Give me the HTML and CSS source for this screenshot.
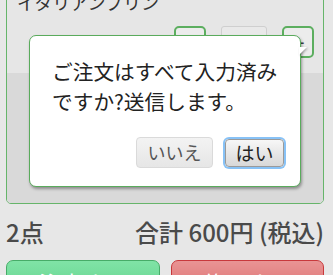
FILE: index.html
```html
<!DOCTYPE html>
<html lang="ja">
<head>
    <meta charset="UTF-8">
    <meta name="viewport" content="width=device-width, initial-scale=1.0">
    <title>注文確認</title>
    <link rel="stylesheet" href="styles.css">
</head>
<body>
    <div class="page">
        <div class="item">
            <div class="item-head">
                <div class="item-name">イタリアンプリン</div>
                <div class="qty">
                    <button class="qty-btn">−</button>
                    <div class="qty-value">1</div>
                    <button class="qty-btn">+</button>
                </div>
            </div>
            <div class="item-body"></div>
        </div>

        <div class="summary">
            <span class="count">2点</span>
            <span class="total">合計 600円 (税込)</span>
        </div>

        <div class="actions">
            <button class="action action-ok">注文する</button>
            <button class="action action-ng">修正する</button>
        </div>

        <div class="dialog">
            <p class="dialog-text">ご注文はすべて入力済み<br>ですか?送信します。</p>
            <div class="dialog-buttons">
                <button class="dlg-btn dlg-no">いいえ</button>
                <button class="dlg-btn dlg-yes">はい</button>
            </div>
        </div>
    </div>
</body>
</html>
```

FILE: styles.css
```css
body {
    margin: 0;
    padding: 0;
    background-color: #e7e7e7;
    color: #333;
    font-family: "Noto Sans CJK JP", "Noto Sans", sans-serif;
    overflow: hidden;
}

.page {
    position: relative;
    display: flow-root;
    padding: 0 9px 0 6px;
    height: 275px;
}

/* 商品カード */
.item {
    margin-top: -14px;
    border: 1px solid #66b56a;
    border-radius: 5px;
    overflow: hidden;
}

.item-head {
    background-color: #e6e6e6;
    padding: 3px 9px 15px 10px;
}

.item-name {
    font-size: 18px;
    line-height: 24px;
    color: #333;
}

.qty {
    display: flex;
    justify-content: flex-end;
    gap: 15px;
    margin-top: 12px;
}

.qty-btn {
    width: 32px;
    height: 32px;
    border: 2px solid #5cae5f;
    border-radius: 5px;
    background-color: #ececec;
    color: #444;
    font-family: inherit;
    font-size: 24px;
    line-height: 26px;
    padding: 0;
}

.qty-value {
    width: 44px;
    height: 30px;
    border: 1px solid #cfcfcf;
    border-radius: 3px;
    background-color: #e9e9e9;
    text-align: center;
    font-size: 18px;
    line-height: 30px;
}

.item-body {
    background-color: #d9d9d9;
    height: 130px;
}

/* 合計 */
.summary {
    display: flex;
    justify-content: space-between;
    margin-top: 12px;
    font-size: 24px;
    line-height: 32px;
    font-weight: 500;
    color: #4a4a4a;
}

.actions {
    display: flex;
    gap: 11px;
    margin-top: 12px;
}

.action {
    flex: 1;
    height: 44px;
    border-radius: 7px;
    color: #fff;
    font-family: inherit;
    font-size: 22px;
    line-height: 24px;
    padding: 9px 0 0;
    display: flex;
    justify-content: center;
    align-items: flex-start;
}

.action-ok {
    border: 1px solid #47ac68;
    background: linear-gradient(#80e3a6, #5ccf88);
}

.action-ng {
    border: 1px solid #c8393c;
    background: linear-gradient(#e99494, #d96767);
}

/* 確認ダイアログ */
.dialog {
    position: absolute;
    left: 29px;
    top: 35px;
    width: 270px;
    height: 150px;
    background-color: #fff;
    border: 1px solid #5aab5c;
    border-radius: 7px;
    box-shadow: 1px 2px 3px rgba(0, 0, 0, 0.35);
}

.dialog::after {
    content: "";
    position: absolute;
    right: -7px;
    top: 11px;
    border-bottom: 8px solid transparent;
    border-left: 8px solid #fff;
    filter: drop-shadow(1px 1px 1px rgba(0, 0, 0, 0.3));
}

.dialog-text {
    margin: 20px 0 0 22px;
    font-size: 20.7px;
    line-height: 30px;
    color: #222;
}

.dialog-buttons {
    display: flex;
    justify-content: flex-end;
    align-items: center;
    gap: 12px;
    margin: 21px 16px 0 0;
}

.dlg-btn {
    box-sizing: border-box;
    font-family: inherit;
    border-radius: 4px;
    padding: 0;
    height: 31px;
    line-height: 29px;
    font-size: 18px;
    white-space: nowrap;
}

.dlg-no {
    width: 77px;
    border: 1px solid #dadada;
    background: linear-gradient(#f3f3f3, #e6e6e6);
    color: #555;
}

.dlg-yes {
    width: 59px;
    height: 28px;
    line-height: 26px;
    font-size: 19px;
    border: 1px solid #9a9a9a;
    background: linear-gradient(#f7f7f7, #d8d8d8);
    color: #222;
    box-shadow: 0 0 0 2px #88c2f6;
}
```
